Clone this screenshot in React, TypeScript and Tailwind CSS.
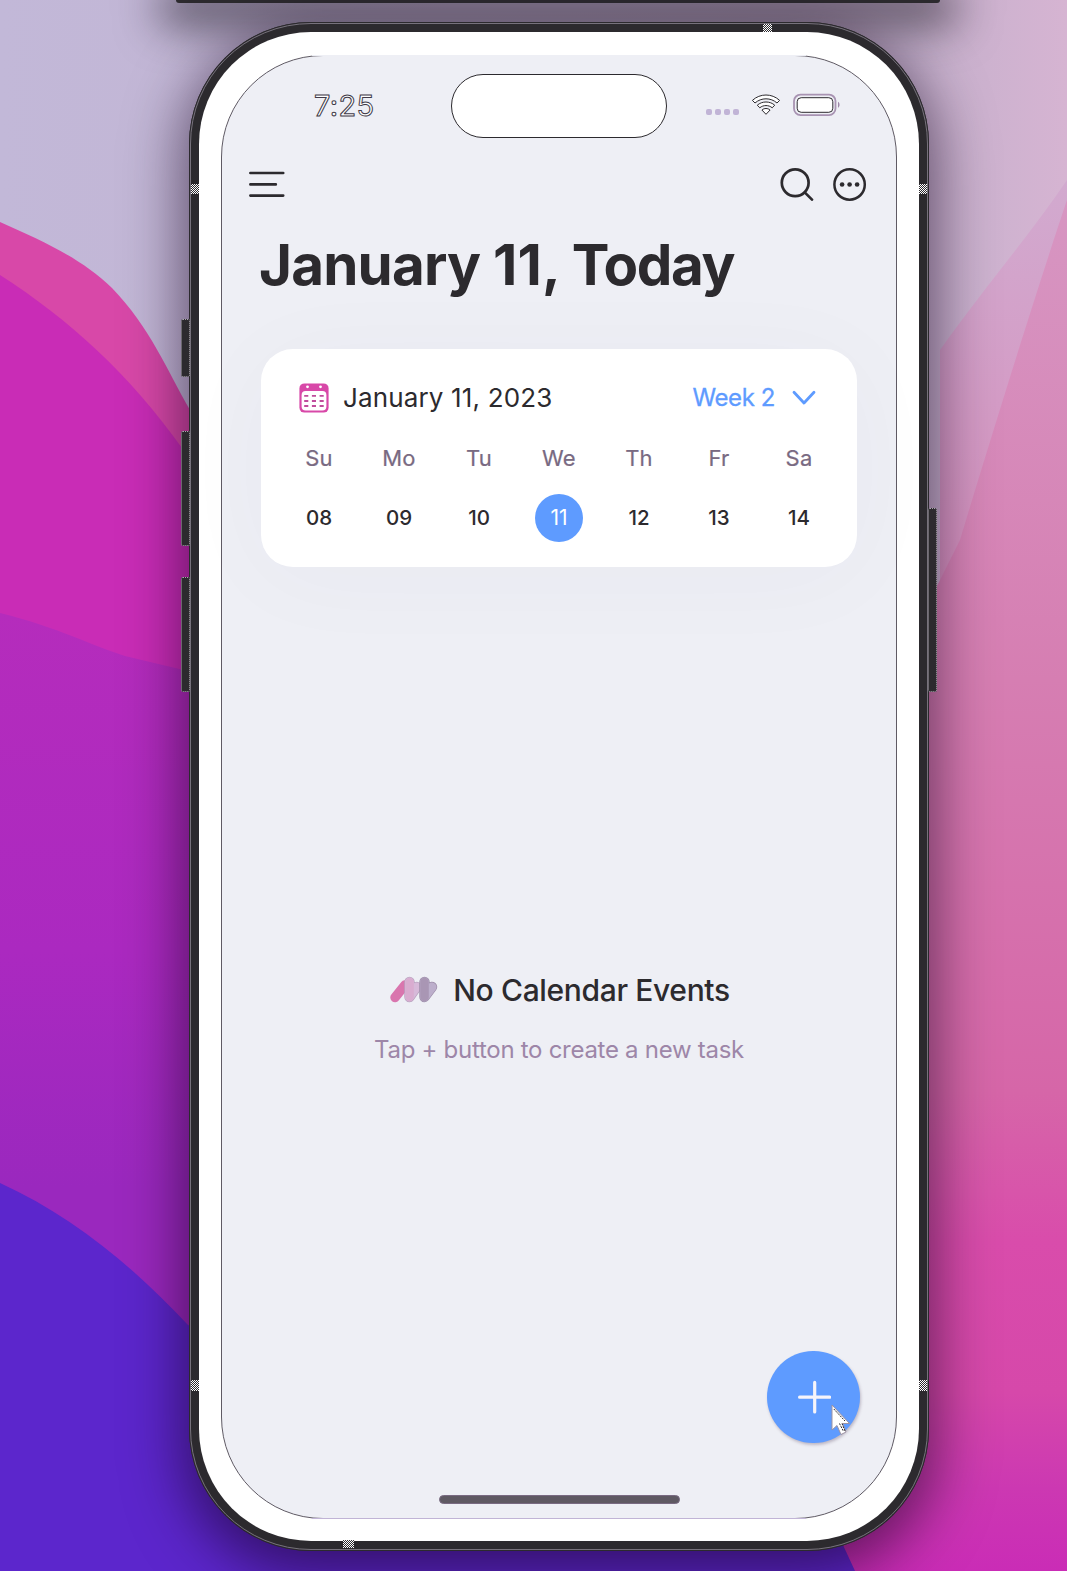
import React from "react";

const week = [
  ["Su", "08"],
  ["Mo", "09"],
  ["Tu", "10"],
  ["We", "11"],
  ["Th", "12"],
  ["Fr", "13"],
  ["Sa", "14"],
];

function Wallpaper() {
  return (
    <svg className="absolute inset-0 h-full w-full" viewBox="0 0 1067 1571" preserveAspectRatio="none" aria-hidden="true">
      <defs>
        <linearGradient id="pinkRight" x1="0" y1="0" x2="0" y2="1">
          <stop offset="0" stopColor="#d796c2" />
          <stop offset=".35" stopColor="#d67eb2" />
          <stop offset=".65" stopColor="#d666a8" />
          <stop offset=".76" stopColor="#d94cab" />
          <stop offset=".87" stopColor="#d648aa" />
          <stop offset=".94" stopColor="#cc38b2" />
          <stop offset="1" stopColor="#ca2cb6" />
        </linearGradient>
        <linearGradient id="pinkHaze" x1="0" y1="0" x2="0" y2="1">
          <stop offset="0" stopColor="#d2aacf" />
          <stop offset="1" stopColor="#d68dbc" />
        </linearGradient>
        <linearGradient id="sky" x1="0" y1="0" x2="1" y2="0">
          <stop offset="0" stopColor="#c2b8d8" />
          <stop offset=".85" stopColor="#c4b0cc" />
          <stop offset="1" stopColor="#d6b4d2" />
        </linearGradient>
        <linearGradient id="violet" x1="0" y1="0" x2="0" y2="1">
          <stop offset="0" stopColor="#b52cbc" />
          <stop offset=".35" stopColor="#ab29c0" />
          <stop offset=".6" stopColor="#9a28be" />
          <stop offset="1" stopColor="#9a28be" />
        </linearGradient>
      </defs>
      <rect width="1067" height="1571" fill="url(#sky)" />
      <path d="M1067 180C1030 235 990 280 940 350V640H1067Z" fill="url(#pinkHaze)" />
      <path d="M1067 200C1040 280 990 440 960 540L880 700L780 1500V1571H1067Z" fill="url(#pinkRight)" />
      <path d="M0 222C40 240 80 257 112 288C150 327 168 372 190 410L560 620V1571H0Z" fill="#d848a8" />
      <path d="M0 275C70 320 130 375 182 448L560 700V1571H0Z" fill="#c92cb6" />
      <path d="M0 613C60 628 90 645 125 656L560 760V1571H0Z" fill="url(#violet)" />
      <path d="M0 1183C70 1215 130 1263 188 1325L560 1480L843 1545L855 1571H0Z" fill="#5c26cc" />
    </svg>
  );
}

function StatusBar() {
  return (
    <div className="flex h-[81px] items-start justify-between pt-[18px]">
      <div className="w-[230px] pt-[11px] pl-[92px]">
        <span className="block text-[29px] leading-[42px] font-normal tracking-[0.3px] text-white [-webkit-text-stroke:1px_#403a48]">7:25</span>
      </div>
      <div className="h-[64px] w-[216px] rounded-full border border-[#2c2a2e] bg-white" />
      <div className="flex w-[230px] items-start gap-[13px] pt-[19px] pl-[39px]">
        <div className="flex gap-[4px] pt-[16px]">
          {[0, 1, 2, 3].map((i) => (
            <span key={i} className="h-[6px] w-[6px] rounded-[2px] bg-[#c1b4d6] not-first:-ml-[1px]" />
          ))}
        </div>
        <svg width="30" height="24" viewBox="0 0 30 24" fill="#fff" stroke="#2c2a2e" strokeWidth="1" className="-ml-[1px]">
          <path d="M1.4 7.4C9 .2 21 .2 28.6 7.4L26 10C19.8 4.4 10.2 4.4 4 10Z" />
          <path d="M6.3 12.2C11 7.9 19 7.9 23.7 12.2L21.2 14.8C17.8 11.8 12.2 11.8 8.8 14.8Z" />
          <path d="M10.9 17C13.2 15 16.8 15 19.1 17L15 21.3Z" />
        </svg>
        <svg width="48" height="24" viewBox="0 0 48 24" fill="none" className="-ml-[1px]">
          <rect x="1" y="1.6" width="41.5" height="20.5" rx="6.5" stroke="#a893b2" strokeWidth="1.8" />
          <rect x="4.2" y="4.7" width="35.6" height="14.6" rx="4" fill="#fff" stroke="#2c2a2e" />
          <path d="M45 8.8c2 1 2 5 0 6Z" fill="#9d86a8" />
        </svg>
      </div>
    </div>
  );
}

function Toolbar() {
  return (
    <div className="flex h-[94px] items-center justify-between pr-[29px] pl-[27px]">
      <svg width="36" height="28" viewBox="0 0 36 28" stroke="#2c2a2e" strokeWidth="2.7" strokeLinecap="round">
        <path d="M1.4 3H34.2M1.4 14.4H26.8M1.4 25.6H34.2" />
      </svg>
      <div className="flex items-center gap-[19px]">
        <svg width="34" height="34" viewBox="0 0 34 34" fill="none" stroke="#2c2a2e" strokeWidth="2.7" strokeLinecap="round">
          <circle cx="15.2" cy="15.8" r="13.4" />
          <path d="M24.7 25.4L32 32.6" />
        </svg>
        <svg width="34" height="34" viewBox="0 0 34 34" fill="none" stroke="#2c2a2e" strokeWidth="2.5">
          <circle cx="16.6" cy="17.5" r="15.2" />
          <g fill="#2c2a2e" stroke="none">
            <circle cx="9.1" cy="17.5" r="2.3" />
            <circle cx="16.6" cy="17.5" r="2.3" />
            <circle cx="24.1" cy="17.5" r="2.3" />
          </g>
        </svg>
      </div>
    </div>
  );
}

function CalendarIcon() {
  return (
    <svg width="30" height="30" viewBox="0 0 30 30">
      <rect x=".4" y=".4" width="29.2" height="29.2" rx="5" fill="#d848a8" />
      <rect x="2.6" y="8" width="24.8" height="19.6" rx="4" fill="#fff" />
      <circle cx="8.5" cy="3.8" r="1.4" fill="#fff" />
      <circle cx="21.5" cy="3.8" r="1.4" fill="#fff" />
      <path d="M5.2 12.8H9.3M12.9 12.8H17M20.6 12.8H24.7M5.2 18H9.3M12.9 18H17M20.6 18H24.7M5.2 23H9.3M12.9 23H17M20.6 23H24.7" stroke="#c04c9c" strokeWidth="1.8" />
    </svg>
  );
}

function WeekCard() {
  return (
    <section className="mx-[39px] h-[218px] rounded-[32px] bg-white shadow-[0_10px_100px_rgba(70,60,100,0.03)]">
      <div className="flex h-[84px] items-start pt-[34px] pr-[41px] pl-[38px]">
        <CalendarIcon />
        <span className="ml-[14px] text-[26px] leading-[30px] tracking-[0.15px] whitespace-nowrap text-[#2c2a2e]">January 11, 2023</span>
        <span className="ml-auto text-[24px] leading-[30px] tracking-[-0.4px] whitespace-nowrap text-[#5e9bff] [-webkit-text-stroke:0.3px_#5e9bff]">Week 2</span>
        <svg width="24" height="16" viewBox="0 0 24 16" fill="none" className="mt-[7px] ml-[17px]" stroke="#5e9bff" strokeWidth="2.8" strokeLinecap="round" strokeLinejoin="round">
          <path d="M2 2.2L12 13L22 2.2" />
        </svg>
      </div>
      <div className="grid grid-cols-7 px-[18px] text-center">
        {week.map(([day, date]) => (
          <div key={day} className="flex flex-col items-center">
            <span className="text-[22px] leading-[50px] tracking-[0.2px] text-[#796a82] [-webkit-text-stroke:0.2px_#796a82]">{day}</span>
            <span
              className={
                date === "11"
                  ? "mt-[11px] h-[48px] w-[48px] rounded-full bg-[#5e9bff] text-[21px] leading-[48px] text-white"
                  : "mt-[11px] h-[48px] w-[48px] text-[20.5px] leading-[48px] font-medium text-[#2c2a2e]"
              }
            >
              {date}
            </span>
          </div>
        ))}
      </div>
    </section>
  );
}

function RibbonMark() {
  return (
    <svg width="48" height="28" viewBox="0 0 48 28" fill="none" strokeLinecap="round" strokeLinejoin="round">
      <path d="M5 21.5L15 9" stroke="#d975ae" strokeWidth="9.4" />
      <path d="M19.5 6V21L26.5 11" fill="#d7b9d9" stroke="#b9a3bf" strokeWidth="10.4" />
      <path d="M19.5 6V21L26.5 11" fill="#d7b9d9" stroke="#d7b9d9" strokeWidth="9" />
      <path d="M19.5 6V21" stroke="#d9acd0" strokeWidth="8.6" />
      <path d="M34.5 6V21L42 11" fill="#b9a9c8" stroke="#9c8ca8" strokeWidth="10.4" />
      <path d="M34.5 6V21L42 11" fill="#b9a9c8" stroke="#bcaecb" strokeWidth="9" />
      <path d="M34.5 6V21" stroke="#a996b4" strokeWidth="8.6" />
    </svg>
  );
}

function EmptyState() {
  return (
    <div className="flex flex-col items-center pt-[403px]">
      <div className="flex items-center pl-[2px]">
        <RibbonMark />
        <h2 className="ml-[15px] text-[30px] leading-[40px] font-medium tracking-[-0.35px] whitespace-nowrap text-[#2c2a2e]">No Calendar Events</h2>
      </div>
      <p className="mt-[21px] text-[24px] leading-[38px] tracking-[-0.28px] whitespace-nowrap text-[#9d86a8]">Tap + button to create a new task</p>
    </div>
  );
}

const antenna = "absolute bg-[repeating-conic-gradient(#fff_0_25%,#2c2a2e_0_50%)] bg-[length:2px_2px]";
const sideKey = "absolute rounded-[2px] border border-dotted border-[#aaa6ae] bg-[#2c2a2e]";

export default function App() {
  return (
    <main className="relative h-[1571px] w-[1067px] overflow-hidden font-[Inter,sans-serif]">
      <Wallpaper />
      <div className="relative mx-auto ml-[176px] h-[3px] w-[764px] rounded-b-[6px] bg-[#2c2a2e] shadow-[0_6px_44px_16px_rgba(20,16,24,0.65)]" />
      <div className="relative mt-[19px] ml-[189px] h-[1529px] w-[740px] rounded-[122px] bg-[#2c2a2e] shadow-[0_16px_56px_8px_rgba(20,0,30,0.55)]">
        <div className={`${sideKey} top-[297px] -left-[8px] h-[58px] w-[9px]`} />
        <div className={`${sideKey} top-[409px] -left-[8px] h-[115px] w-[9px]`} />
        <div className={`${sideKey} top-[555px] -left-[8px] h-[115px] w-[9px]`} />
        <div className={`${sideKey} top-[486px] -right-[8px] h-[184px] w-[9px]`} />
        <div className="flex h-full rounded-[122px] border border-[#2c2a2e]">
          <div className="flex w-full rounded-[121px] border border-[#77727c] p-[8px]">
            <div className="flex w-full rounded-[112px] bg-white p-[22px] pt-[23px]">
              <div className="relative flex w-full flex-col rounded-[102px] border border-[#5f5a64] bg-[#eeeff5]">
                <div className="absolute -top-px right-[90px] left-[90px] h-px bg-[#eeeff5]" />
                <div className="absolute right-[90px] -bottom-px left-[90px] h-px bg-[#c1b4d6]" />
                <StatusBar />
                <Toolbar />
                <h1 className="-mt-[1px] pl-[37px] text-[56.5px] leading-[70px] font-bold tracking-[-0.8px] whitespace-nowrap text-[#2c2a2e]">
                  January <span className="tracking-[0.2px]">11,</span> <span className="-ml-[2px] tracking-[-1.4px]">Today</span>
                </h1>
                <div className="h-[49px]" />
                <WeekCard />
                <EmptyState />
                <div className="mt-auto flex flex-col">
                  <button aria-label="Add task" className="mr-[36px] flex h-[92px] w-[93px] items-center justify-center self-end rounded-full bg-[#5e9bff] shadow-[1px_2px_3px_rgba(80,60,90,0.3)]">
                    <svg width="34" height="34" viewBox="0 0 34 34" stroke="#f6f4fa" strokeWidth="3.2" strokeLinecap="round">
                      <path d="M17.7 2.4V32M2.6 17.2H32.6" />
                    </svg>
                  </button>
                  <div className="mt-[52px] mb-[14px] h-[9px] w-[241px] self-center rounded-full border border-[#796a82] bg-[#5f5963]" />
                </div>
              </div>
            </div>
          </div>
        </div>
        <div className={`${antenna} top-[2px] left-[574px] h-[8px] w-[9px]`} />
        <div className={`${antenna} top-[162px] left-[2px] h-[10px] w-[8px]`} />
        <div className={`${antenna} top-[162px] right-[2px] h-[10px] w-[8px]`} />
        <div className={`${antenna} top-[1358px] left-[2px] h-[11px] w-[8px]`} />
        <div className={`${antenna} top-[1358px] right-[2px] h-[11px] w-[8px]`} />
        <div className={`${antenna} bottom-[3px] left-[154px] h-[8px] w-[11px]`} />
        <svg className="absolute top-[1381px] left-[641px]" width="22" height="34" viewBox="0 0 22 34" aria-hidden="true">
          <path d="M2 2V27L7 22.5L11 31.5L16 29L12.5 20.5H19.5Z" fill="#fff" stroke="#9d93a3" strokeWidth="1" />
          <path d="M3.8 6L15 18M9.5 20.5L13.5 28.5M12 20.5L15 28" stroke="#2c2a2e" strokeWidth="1" strokeDasharray="2 1" />
        </svg>
      </div>
    </main>
  );
}
